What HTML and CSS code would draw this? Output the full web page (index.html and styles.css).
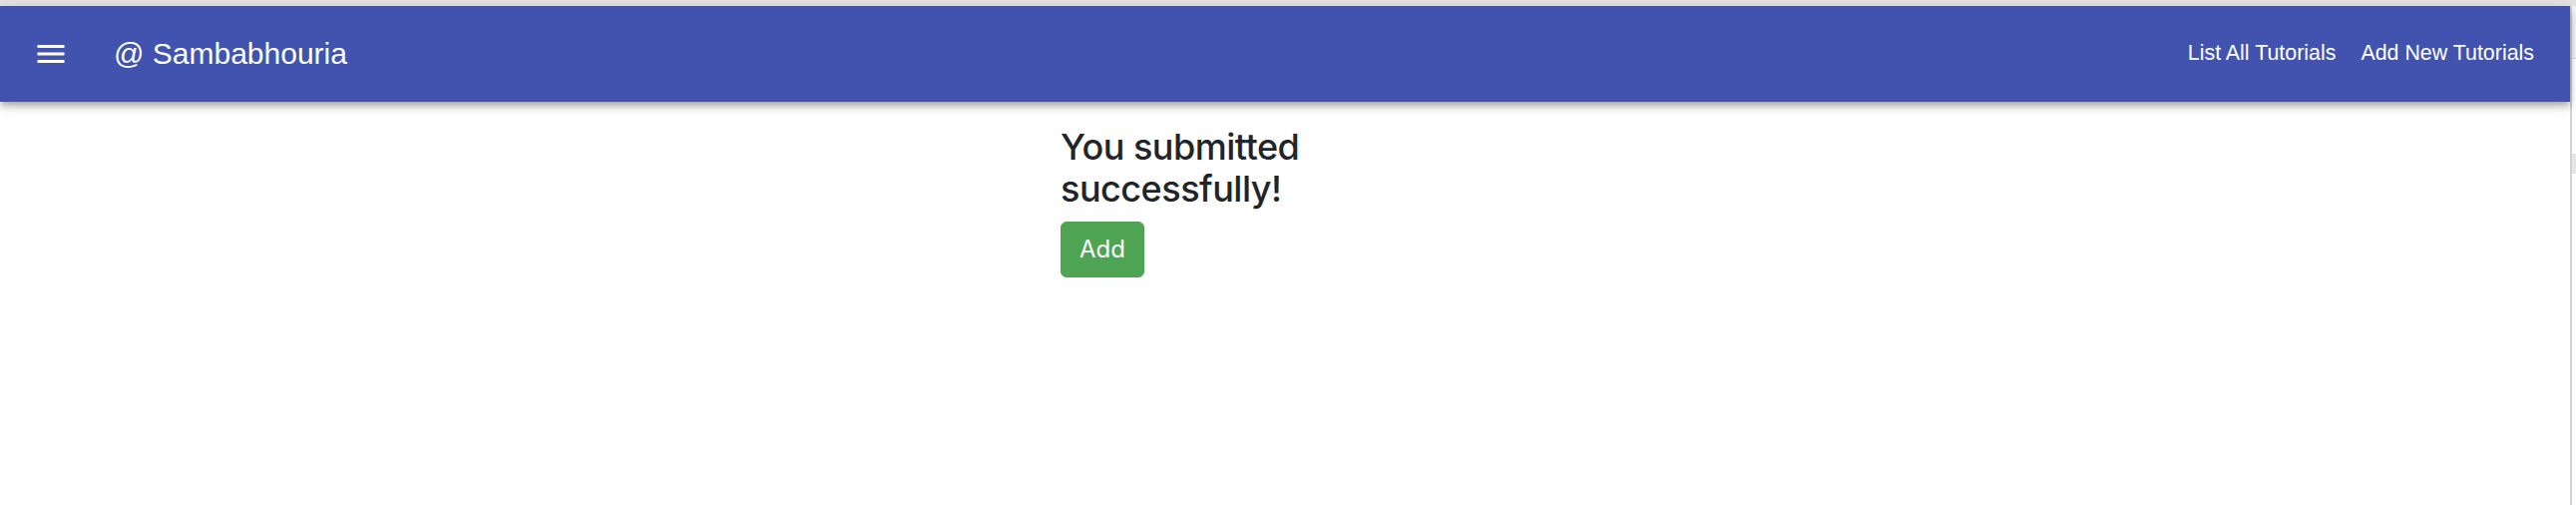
FILE: index.html
```html
<!DOCTYPE html>
<html lang="en">
<head>
<meta charset="utf-8">
<title>Sambabhouria</title>
<link rel="stylesheet" href="styles.css">
</head>
<body>
<div class="topstrip"></div>
<div class="page">
  <div class="app">
    <header class="appbar">
      <button class="menu-btn" aria-label="menu">
        <svg width="36" height="36" viewBox="0 0 24 24"><path fill="#ffffff" d="M3 18h18v-2H3v2zm0-5h18v-2H3v2zm0-7v2h18V6H3z"/></svg>
      </button>
      <div class="brand">@ Sambabhouria</div>
      <nav class="nav">
        <a class="nav-link" href="#">List All Tutorials</a>
        <a class="nav-link" href="#">Add New Tutorials</a>
      </nav>
    </header>
    <main class="container">
      <div class="submit-form">
        <h4 class="title">You submitted successfully!</h4>
        <button class="btn-success">Add</button>
      </div>
    </main>
  </div>
  <div class="edge">
    <div class="edge-top"></div>
    <div class="edge-block"></div>
  </div>
</div>
</body>
</html>
```
FILE: styles.css
```css
html, body {
  margin: 0;
  padding: 0;
  background: #ffffff;
  height: 100%;
}
body {
  font-family: "Liberation Sans", Arial, sans-serif;
  overflow: hidden;
}
.topstrip {
  height: 6px;
  background: #e3e3e3;
}
.page {
  display: flex;
  height: 500px;
}
.app {
  flex: 1;
  min-width: 0;
}
.appbar {
  height: 96px;
  background: #4253af;
  display: flex;
  align-items: center;
  padding: 0 36px 0 33px;
  box-sizing: border-box;
  box-shadow: 0 3px 6px -1.5px rgba(0,0,0,0.2), 0 6px 7.5px 0 rgba(0,0,0,0.14), 0 1.5px 15px 0 rgba(0,0,0,0.12);
  position: relative;
  z-index: 1;
}
.menu-btn {
  width: 36px;
  height: 36px;
  padding: 0;
  border: 0;
  background: none;
  display: flex;
}
.brand {
  margin-left: 45px;
  color: #ffffff;
  font-size: 30px;
  line-height: 1;
  flex: 1;
}
.nav {
  display: flex;
  gap: 25px;
}
.nav-link {
  color: #ffffff;
  text-decoration: none;
  font-size: 21.4px;
  line-height: 1;
}
.container {
  padding-top: 24px;
}
.submit-form {
  max-width: 450px;
  margin: 0 auto;
}
.title {
  margin: 0 0 12px;
  font-family: Inter, "Liberation Sans", sans-serif;
  font-size: 36px;
  line-height: 1.17;
  font-weight: 500;
  letter-spacing: -0.5px;
  color: #212529;
}
.btn-success {
  font-family: Inter, "Liberation Sans", sans-serif;
  font-size: 24px;
  line-height: 36px;
  padding: 9px 18px;
  border: 1.5px solid #4fa453;
  border-radius: 6px;
  background: #4fa453;
  color: #ffffff;
}
.edge {
  width: 4px;
  border-left: 2px solid #d2d2d2;
  background: #ffffff;
  display: flex;
  flex-direction: column;
}
.edge-top {
  height: 52px;
  background: #f4f4f4;
  border-bottom: 1px solid #d6d6d6;
}
.edge-block {
  margin-top: 95px;
  height: 20px;
  background: #e6e6e6;
}
```
